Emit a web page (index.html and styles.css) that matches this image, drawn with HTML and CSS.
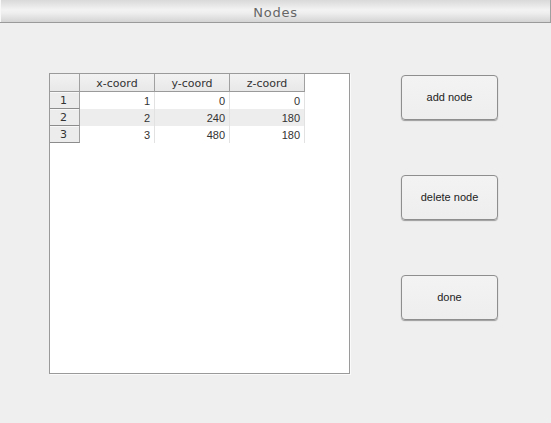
FILE: index.html
```html
<!DOCTYPE html>
<html>
<head>
<meta charset="utf-8">
<link rel="stylesheet" href="styles.css">
</head>
<body>
<div class="titlebar"><span class="title">Nodes</span></div>
<div class="main">
  <div class="frame">
    <div class="grid">
      <div class="corner"></div>
      <div class="colhead">x-coord</div>
      <div class="colhead">y-coord</div>
      <div class="colhead">z-coord</div>

      <div class="rowhead">1</div>
      <div class="cell">1</div>
      <div class="cell">0</div>
      <div class="cell">0</div>

      <div class="rowhead">2</div>
      <div class="cell alt">2</div>
      <div class="cell alt">240</div>
      <div class="cell alt">180</div>

      <div class="rowhead">3</div>
      <div class="cell">3</div>
      <div class="cell">480</div>
      <div class="cell">180</div>
    </div>
  </div>
  <div class="buttons">
    <button class="btn">add node</button>
    <button class="btn">delete node</button>
    <button class="btn">done</button>
  </div>
</div>
</body>
</html>
```

FILE: styles.css
```css
html, body {
  margin: 0;
  padding: 0;
}
body {
  background: #efefef;
  width: 551px;
  height: 423px;
  overflow: hidden;
  font-family: "Liberation Sans", Arial, sans-serif;
}
.titlebar {
  height: 22px;
  border-bottom: 1px solid #9a9a9a;
  background: linear-gradient(#d9d9d9 0%, #f3f3f3 45%, #eeeeee 60%, #d4d4d4 100%);
  display: flex;
  justify-content: center;
  align-items: center;
  box-shadow: inset 1px 0 0 #f8f8f8, inset -1px 0 0 #a0a0a0;
}
.title {
  font-family: "DejaVu Sans", sans-serif;
  font-weight: normal;
  font-size: 13px;
  letter-spacing: 0.8px;
  color: #666;
  margin-top: 2px;
}
.main {
  display: flex;
  padding: 50px 0 0 49px;
}
.frame {
  width: 299px;
  height: 299px;
  border: 1px solid #9a9a9a;
  background: #ffffff;
  box-shadow: 1px 1px 0 #fafafa;
}
.grid {
  display: grid;
  grid-template-columns: 30px 75px 75px 75px;
  grid-template-rows: 18px 17px 17px 17px;
}
.corner, .colhead {
  background: linear-gradient(#f2f2f2, #e8e8e8);
  border-right: 1px solid #a0a0a0;
  border-bottom: 1px solid #9a9a9a;
  box-sizing: border-box;
}
.colhead {
  font-family: "DejaVu Sans", sans-serif;
  font-size: 11px;
  color: #333;
  display: flex;
  align-items: center;
  justify-content: center;
  padding-top: 1px;
}
.rowhead {
  background: #ececec;
  border-right: 1px solid #a0a0a0;
  border-bottom: 1px solid #8c8c8c;
  box-shadow: inset 0 1px 0 #f8f8f8;
  box-sizing: border-box;
  font-family: "DejaVu Sans", sans-serif;
  font-size: 11px;
  color: #333;
  display: flex;
  align-items: center;
  padding-left: 10px;
  padding-top: 1px;
}
.cell {
  box-sizing: border-box;
  border-right: 1px solid #e2e2e2;
  font-size: 11px;
  color: #333;
  display: flex;
  align-items: center;
  justify-content: flex-end;
  padding-right: 4px;
  background: #fff;
}
.cell.alt {
  background: #ededed;
}
.buttons {
  display: flex;
  flex-direction: column;
  gap: 55px;
  margin-left: 51px;
  margin-top: 2px;
}
.btn {
  width: 97px;
  height: 45px;
  border: 1px solid #8e8e8e;
  border-radius: 4px;
  background: linear-gradient(#f3f3f3, #eeeeee);
  box-shadow: 0 1px 1px rgba(0,0,0,0.35);
  font-family: "Liberation Sans", Arial, sans-serif;
  font-size: 11px;
  color: #222;
  padding: 0 0 2px 0;
  margin: 0;
}
```
